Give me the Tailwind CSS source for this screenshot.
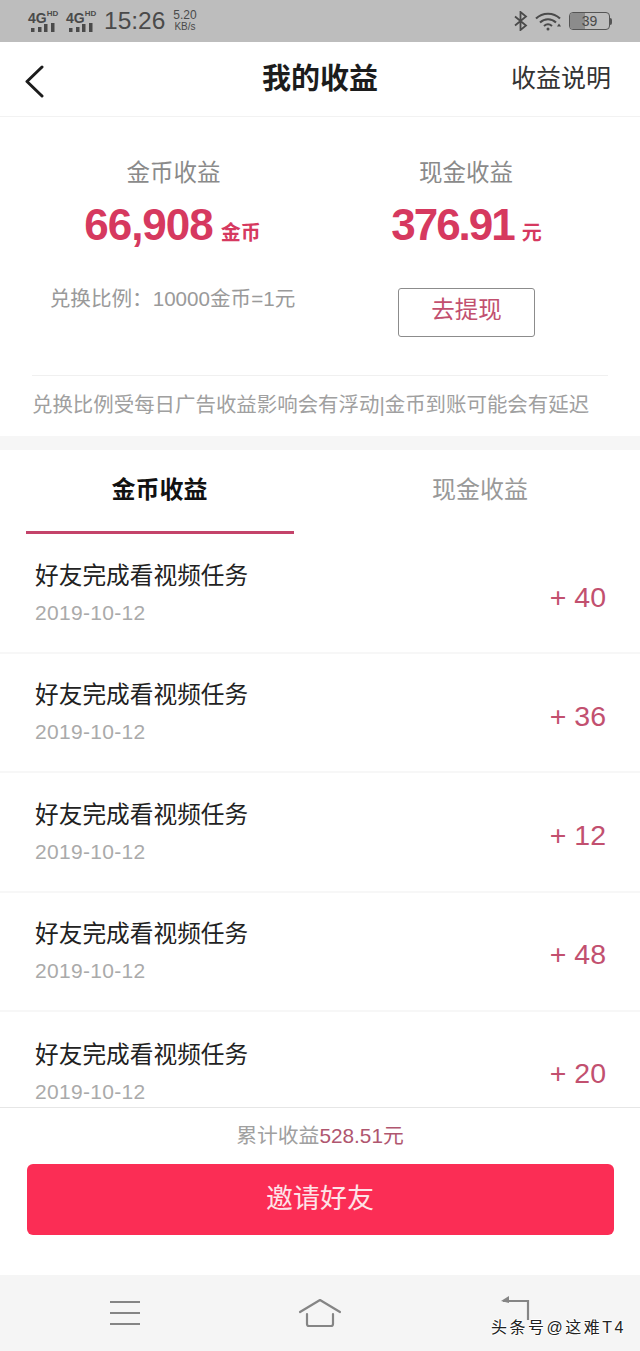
<!DOCTYPE html>
<html lang="zh">
<head>
<meta charset="UTF-8" />
<title>我的收益</title>
<script src="https://cdn.jsdelivr.net/npm/@tailwindcss/browser@4"></script>
</head>
<body class="bg-white font-['Liberation_Sans','Noto_Sans_CJK_SC',sans-serif]">
<div class="w-[640px] h-[1351px] flex flex-col overflow-hidden relative">

  <!-- status bar -->
  <div class="h-[42px] shrink-0 bg-[#bdbdbd] flex items-center pl-[28px] pr-[28px] text-[#4a4a4a]">
    <div class="flex gap-[8px]">
      <div class="w-[30px]">
        <div class="flex items-start font-bold leading-none text-[14px]">4G<span class="text-[8px] -mt-[1px]">HD</span></div>
        <svg width="28" height="9" viewBox="0 0 28 9" class="-mt-[2px]" fill="#4a4a4a"><rect x="3" y="5" width="3.5" height="4"/><rect x="10" y="4" width="3.5" height="5"/><rect x="16" y="1" width="3.5" height="8"/><rect x="23" y="0" width="3.5" height="9"/></svg>
      </div>
      <div class="w-[30px]">
        <div class="flex items-start font-bold leading-none text-[14px]">4G<span class="text-[8px] -mt-[1px]">HD</span></div>
        <svg width="28" height="9" viewBox="0 0 28 9" class="-mt-[2px]" fill="#4a4a4a"><rect x="3" y="5" width="3.5" height="4"/><rect x="10" y="4" width="3.5" height="5"/><rect x="16" y="1" width="3.5" height="8"/><rect x="23" y="0" width="3.5" height="9"/></svg>
      </div>
    </div>
    <span class="ml-[8px] text-[24.5px] leading-none">15:26</span>
    <div class="ml-[8px] text-[10px] leading-[11px] text-center"><div class="text-[12px]">5.20</div><div>KB/s</div></div>
    <div class="ml-auto flex items-center gap-[7px]">
      <svg width="14" height="20" viewBox="0 0 14 20" fill="none" stroke="#4a4a4a" stroke-width="1.8"><path d="M1 5.5 12 14.5 6.5 19V1L12 5.5 1 14.5"/></svg>
      <svg width="27" height="20" viewBox="0 0 27 20" fill="none" stroke="#4a4a4a" stroke-width="2"><path d="M1 7.5C7.5 1 18.5 1 25 7.5"/><path d="M5 11.5C9.5 7 16.5 7 21 11.5"/><path d="M9 15C11.5 12.8 14.5 12.8 17 15"/><circle cx="13" cy="18" r="1.5" fill="#4a4a4a" stroke="none"/><path d="M22 15.5h4l-2-3z" fill="#4a4a4a" stroke="none"/></svg>
      <div class="flex items-center">
        <div class="w-[41px] h-[18px] border border-[#555] rounded-[4px] relative flex items-center justify-center text-[14px] leading-none overflow-hidden">
          <div class="absolute left-0 top-0 bottom-0 w-[15px] bg-[#8c8c8c]"></div>
          <span class="relative">39</span>
        </div>
        <div class="w-[2px] h-[7px] bg-[#555] rounded-r-sm"></div>
      </div>
    </div>
  </div>

  <!-- nav bar -->
  <div class="h-[75px] shrink-0 border-b border-[#f2f2f2] flex items-center relative px-[24px]">
    <svg width="22" height="34" viewBox="0 0 22 34" fill="none" stroke="#1c1c1c" stroke-width="3" stroke-linecap="round" stroke-linejoin="round" class="mt-[3px]"><path d="M18 3 3 17.5 18 32"/></svg>
    <div class="absolute left-0 right-0 text-center text-[29px] font-bold text-[#1c1c1c] mt-[2px]">我的收益</div>
    <div class="ml-auto mr-[5px] text-[25px] text-[#333]">收益说明</div>
  </div>

  <!-- earnings summary -->
  <div class="h-[319px] shrink-0 px-[26px] pt-[39px]">
    <div class="grid grid-cols-[293px_1fr]">
      <div class="flex flex-col items-center">
        <div class="text-[23.5px] leading-[34px] text-[#8a8a8a] ml-[2px]">金币收益</div>
        <div class="mt-[11px] flex items-baseline leading-[48px] text-[#d6395f]">
          <span class="text-[44px] font-bold tracking-[-1px]">66,908</span>
          <span class="ml-[8px] text-[20px] font-bold">金币</span>
        </div>
      </div>
      <div class="flex flex-col items-center">
        <div class="text-[23.5px] leading-[34px] text-[#8a8a8a] -ml-[1px]">现金收益</div>
        <div class="mt-[11px] flex items-baseline leading-[48px] text-[#d6395f]">
          <span class="text-[44px] font-bold tracking-[-2px]">376.91</span>
          <span class="ml-[8px] text-[20px] font-bold">元</span>
        </div>
      </div>
      <div class="text-center mt-[27px] text-[20.6px] leading-[30px] text-[#9a9a9a]">兑换比例：10000金币=1元</div>
      <div class="flex justify-center mt-[31px]">
        <div class="w-[137px] h-[49px] pb-[4px] border border-[#8c8c8c] rounded-[3px] flex items-center justify-center text-[23.5px] text-[#c2506f]">去提现</div>
      </div>
    </div>
    <div class="mt-[38px] border-t border-[#f0f0f0] pt-[14px] text-[20.45px] leading-[30px] text-[#a0a0a0] whitespace-nowrap mx-[6px]">兑换比例受每日广告收益影响会有浮动|金币到账可能会有延迟</div>
  </div>

  <div class="h-[14px] shrink-0 bg-[#f6f6f6]"></div>

  <!-- tabs -->
  <div class="h-[84px] shrink-0 grid grid-cols-2 relative text-[24px] pb-[4px]">
    <div class="flex items-center justify-center font-bold text-[#111] -ml-[1px]">金币收益</div>
    <div class="flex items-center justify-center text-[#999]">现金收益</div>
    <div class="absolute left-[26px] bottom-0 w-[268px] h-[3px] bg-[#c4436a]"></div>
  </div>

  <!-- list -->
  <div class="flex-1 min-h-0 overflow-hidden">
    <div class="h-[119.5px] border-b-2 border-[#f7f7f7] flex items-center justify-between px-[34px]">
      <div><div class="text-[23.7px] leading-[36px] text-[#222] ml-[1px]">好友完成看视频任务</div><div class="text-[21px] tracking-[0.3px] leading-[30px] mt-[4px] text-[#aaa] ml-[1px]">2019-10-12</div></div>
      <div class="text-[28.5px] mt-[10px] text-[#c2506f]">+ 40</div>
    </div>
    <div class="h-[119.5px] border-b-2 border-[#f7f7f7] flex items-center justify-between px-[34px]">
      <div><div class="text-[23.7px] leading-[36px] text-[#222] ml-[1px]">好友完成看视频任务</div><div class="text-[21px] tracking-[0.3px] leading-[30px] mt-[4px] text-[#aaa] ml-[1px]">2019-10-12</div></div>
      <div class="text-[28.5px] mt-[8px] text-[#c2506f]">+ 36</div>
    </div>
    <div class="h-[119.5px] border-b-2 border-[#f7f7f7] flex items-center justify-between px-[34px]">
      <div><div class="text-[23.7px] leading-[36px] text-[#222] ml-[1px]">好友完成看视频任务</div><div class="text-[21px] tracking-[0.3px] leading-[30px] mt-[4px] text-[#aaa] ml-[1px]">2019-10-12</div></div>
      <div class="text-[28.5px] mt-[8px] text-[#c2506f]">+ 12</div>
    </div>
    <div class="h-[119.5px] border-b-2 border-[#f7f7f7] flex items-center justify-between px-[34px]">
      <div><div class="text-[23.7px] leading-[36px] text-[#222] ml-[1px]">好友完成看视频任务</div><div class="text-[21px] tracking-[0.3px] leading-[30px] mt-[4px] text-[#aaa] ml-[1px]">2019-10-12</div></div>
      <div class="text-[28.5px] mt-[7px] text-[#c2506f]">+ 48</div>
    </div>
    <div class="h-[119.5px] flex items-center justify-between px-[34px]">
      <div><div class="text-[23.7px] leading-[36px] text-[#222] ml-[1px]">好友完成看视频任务</div><div class="text-[21px] tracking-[0.3px] leading-[30px] mt-[4px] text-[#aaa] ml-[1px]">2019-10-12</div></div>
      <div class="text-[28.5px] mt-[4px] text-[#c2506f]">+ 20</div>
    </div>
  </div>

  <!-- footer action -->
  <div class="h-[168px] shrink-0 border-t border-[#e6e6e6] bg-white flex flex-col items-center">
    <div class="h-[56px] flex items-center text-[20.8px] text-[#a0a0a0]">累计收益<span class="text-[#b0566f]">528.51元</span></div>
    <div class="w-[587px] h-[71px] rounded-[6px] bg-[#fb2d55] flex items-center justify-center text-[27px] text-[#fde3e8]">邀请好友</div>
  </div>

  <!-- system nav -->
  <div class="h-[76px] shrink-0 bg-[#f5f5f5] grid grid-cols-[250px_140px_250px] relative">
    <div class="flex items-center justify-center">
      <svg width="30" height="24" viewBox="0 0 30 24" fill="none" stroke="#858585" stroke-width="2"><path d="M0 1h30M0 12h30M0 23h30"/></svg>
    </div>
    <div class="flex items-center justify-center">
      <svg width="44" height="30" viewBox="0 0 44 30" fill="none" stroke="#858585" stroke-width="2.2" stroke-linecap="round" stroke-linejoin="round"><path d="M2 14 22 2 42 14"/><path d="M9 16V26Q9 28 11 28H33Q35 28 35 26V16"/></svg>
    </div>
    <div class="flex items-center justify-center">
      <svg width="32" height="30" viewBox="0 0 32 30" fill="none" stroke="#858585" stroke-width="2.2" class="-mt-[8px]"><path d="M4 7H29V26"/><path d="M10 2 2 7l8 2z" fill="#858585" stroke="none"/></svg>
    </div>
    <div class="absolute right-[14px] bottom-[13px] text-[16px] tracking-[2.5px] leading-[20px] text-[#222] whitespace-nowrap [text-shadow:1px_0_0_#fff,-1px_0_0_#fff,0_1px_0_#fff,0_-1px_0_#fff]">头条号@这难T4</div>
  </div>
</div>
</body>
</html>
